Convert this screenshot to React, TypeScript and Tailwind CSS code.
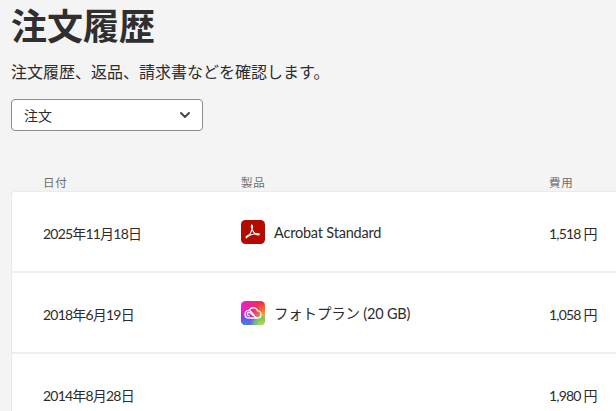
import { ChevronDown } from 'lucide-react';

const font = { fontFamily: 'Lato, "Noto Sans CJK JP", sans-serif' };

function AcrobatIcon() {
  return (
    <svg width="24" height="24" viewBox="0 0 24 24" className="shrink-0">
      <rect width="24" height="24" rx="4.500" fill="#b30b00" />
      <path
        d="M5.300 17.800c-.9-.7.3-2.100 3.500-3.400 1.400-2.500 2.500-5 2.700-7 .2-1.500-.1-2.600-.7-2.400-.8.3-.6 2.600.9 5.600 1.200 2.400 3 4.200 4.600 4.300 1.400.1 2.300-.4 2-.9-.4-.6-2.500-.5-5 0-3.200.6-6.700 2.300-8 3.800z"
        fill="none"
        stroke="#fff"
        strokeWidth="1.100"
        strokeLinejoin="round"
      />
    </svg>
  );
}

function CreativeCloudIcon() {
  return (
    <svg width="24" height="24" viewBox="0 0 24 24" className="shrink-0">
      <defs>
        <linearGradient id="ccBase" x1="0" y1="0" x2="1" y2="0">
          <stop offset="0" stopColor="#e81fd8" />
          <stop offset="1" stopColor="#f8302a" />
        </linearGradient>
        <radialGradient id="ccOrange" cx="1" cy="0.6" r="0.55">
          <stop offset="0" stopColor="#fbb321" />
          <stop offset="1" stopColor="#f7902a" stopOpacity="0" />
        </radialGradient>
        <radialGradient id="ccBlue" cx="0.2" cy="1" r="0.6">
          <stop offset="0" stopColor="#2f8cf5" />
          <stop offset="0.6" stopColor="#6a4cf0" stopOpacity="0.8" />
          <stop offset="1" stopColor="#6a3cf0" stopOpacity="0" />
        </radialGradient>
        <radialGradient id="ccGreen" cx="0.85" cy="1" r="0.5">
          <stop offset="0" stopColor="#b5e63a" />
          <stop offset="0.6" stopColor="#5ed67a" stopOpacity="0.8" />
          <stop offset="1" stopColor="#5ed69a" stopOpacity="0" />
        </radialGradient>
        <clipPath id="ccClip">
          <rect width="24" height="24" rx="4.500" />
        </clipPath>
      </defs>
      <g clipPath="url(#ccClip)">
        <rect width="24" height="24" fill="url(#ccBase)" />
        <rect width="24" height="24" fill="url(#ccOrange)" />
        <rect width="24" height="24" fill="url(#ccBlue)" />
        <rect width="24" height="24" fill="url(#ccGreen)" />
      </g>
      <path
        d="M8 17c-2.300 0-4-1.600-4-3.800 0-2.100 1.700-3.800 4-3.800 3 0 4.500 6 7.500 7.200M8 17h8c2.300 0 4-1.500 4-3.600 0-1.900-1.400-3.400-3.300-3.500C16 8 14.300 6.800 12.300 6.800c-1.900 0-3.500 1-4.300 2.600M8.200 14.800c-1.100 0-1.900-.7-1.900-1.700s.8-1.600 1.900-1.600c1.800 0 3 3.300 5 3.300"
        fill="none"
        stroke="#fff"
        strokeWidth="1.400"
        strokeLinecap="round"
        opacity="0.95"
      />
    </svg>
  );
}

const orders = [
  { date: '2025年11月18日', icon: <AcrobatIcon />, product: 'Acrobat Standard', cost: '1,518 円' },
  { date: '2018年6月19日', icon: <CreativeCloudIcon />, product: 'フォトプラン (20 GB)', cost: '1,058 円' },
  { date: '2014年8月28日', icon: null, product: '', cost: '1,980 円' },
];

export default function App() {
  return (
    <div className="h-[411px] w-[616px] overflow-hidden bg-[#f4f4f4] pl-[11px] text-[#2c2c2c]" style={font}>
      <h1 className="mt-[5px] h-[43px] text-[36px] font-bold leading-[43px] text-[#2f2f2f]">注文履歴</h1>
      <p className="mt-[12px] h-[24px] text-[16px] leading-[24px]">注文履歴、返品、請求書などを確認します。</p>
      <button className="mt-[15px] flex h-[32px] w-[192px] items-center justify-between rounded-[4px] border border-[#8e8e8e] bg-white pl-3 pr-[9px] text-[14px]">
        <span>注文</span>
        <ChevronDown size={16} strokeWidth={3} className="text-[#464646]" />
      </button>
      <div className="mt-[43px] flex h-[17px] items-center pl-[32px] text-[11.500px] tracking-[0.8px] text-[#6e6e6e]">
        <span className="w-[198px]">日付</span>
        <span className="w-[308px]">製品</span>
        <span>費用</span>
      </div>
      <div className="w-[640px] rounded-tl-[4px] border-t border-l border-[#ebebeb] bg-white">
        {orders.map((order) => (
          <div key={order.date} className="flex h-[81px] items-center border-b-2 border-[#eeeeee] pl-[31px] text-[14px]">
            <span className="w-[198px] pt-[4px] tracking-[-0.8px]">{order.date}</span>
            <div className="flex w-[308px] items-center gap-[9px]">
              {order.icon}
              <span className="pt-[3px] text-[14.500px] tracking-[-0.2px]">{order.product}</span>
            </div>
            <span className="pt-[4px] tracking-[-0.8px]">{order.cost}</span>
          </div>
        ))}
      </div>
    </div>
  );
}
